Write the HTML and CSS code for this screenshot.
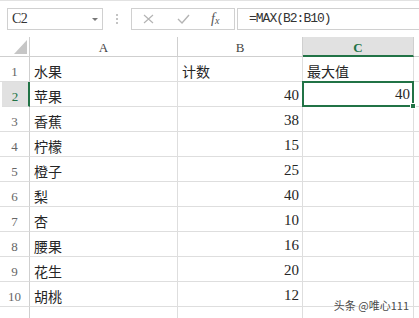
FILE: index.html
```html
<!DOCTYPE html>
<html lang="zh-CN">
<head>
    <meta charset="UTF-8">
    <title>MAX</title>
    <link rel="stylesheet" href="styles.css">
</head>
<body>
    <div class="toolbar">
        <div class="name-box">
            <span>C2</span>
            <svg class="caret" width="6" height="4" viewBox="0 0 6 4"><path d="M0 0h6L3 3z"/></svg>
        </div>
        <div class="grip"><i></i><i></i><i></i></div>
        <div class="buttons">
            <svg class="btn-icon" width="11" height="10" viewBox="0 0 11 10" fill="none" stroke="#b4b4b4" stroke-width="1.2">
                <path d="M1 1l9 8M10 1l-9 8"/>
            </svg>
            <svg class="btn-icon" width="13" height="10" viewBox="0 0 13 10" fill="none" stroke="#b4b4b4" stroke-width="1.4">
                <path d="M1 5l4 4 7-8"/>
            </svg>
            <span class="fx">f<span class="fx-x">x</span></span>
        </div>
        <div class="formula">=MAX(B2:B10)</div>
    </div>

    <div class="sheet">
        <div class="corner">
            <svg width="13" height="14" viewBox="0 0 13 14"><path d="M13 0v14H0z" fill="#c6c6c6"/></svg>
        </div>
        <div class="hd">A</div>
        <div class="hd">B</div>
        <div class="hd active">C</div>
        <div class="hd"></div>

        <div class="rh">1</div>
        <div class="cell">水果</div>
        <div class="cell">计数</div>
        <div class="cell">最大值</div>
        <div class="cell"></div>

        <div class="rh active">2</div>
        <div class="cell">苹果</div>
        <div class="cell num">40</div>
        <div class="cell num selected">40<span class="handle"></span></div>
        <div class="cell"></div>

        <div class="rh">3</div>
        <div class="cell">香蕉</div>
        <div class="cell num">38</div>
        <div class="cell"></div>
        <div class="cell"></div>

        <div class="rh">4</div>
        <div class="cell">柠檬</div>
        <div class="cell num">15</div>
        <div class="cell"></div>
        <div class="cell"></div>

        <div class="rh">5</div>
        <div class="cell">橙子</div>
        <div class="cell num">25</div>
        <div class="cell"></div>
        <div class="cell"></div>

        <div class="rh">6</div>
        <div class="cell">梨</div>
        <div class="cell num">40</div>
        <div class="cell"></div>
        <div class="cell"></div>

        <div class="rh">7</div>
        <div class="cell">杏</div>
        <div class="cell num">10</div>
        <div class="cell"></div>
        <div class="cell"></div>

        <div class="rh">8</div>
        <div class="cell">腰果</div>
        <div class="cell num">16</div>
        <div class="cell"></div>
        <div class="cell"></div>

        <div class="rh">9</div>
        <div class="cell">花生</div>
        <div class="cell num">20</div>
        <div class="cell"></div>
        <div class="cell"></div>

        <div class="rh">10</div>
        <div class="cell">胡桃</div>
        <div class="cell num">12</div>
        <div class="cell"></div>
        <div class="cell"></div>

        <div class="rh">11</div>
        <div class="cell"></div>
        <div class="cell"></div>
        <div class="cell"></div>
        <div class="cell"></div>
    </div>

    <div class="watermark">头条 @唯心111</div>
</body>
</html>
```

FILE: styles.css
```css
* {
    margin: 0;
    padding: 0;
    box-sizing: border-box;
}

:root {
    --green: #217346;
    --grid: #dedede;
    --head-line: #cfcfcf;
    --text: #262626;
}

body {
    position: relative;
    width: 419px;
    height: 318px;
    overflow: hidden;
    background: #ffffff;
    font-family: "Noto Sans CJK SC", "Noto Sans", sans-serif;
    color: var(--text);
}

/* formula bar */
.toolbar {
    height: 37px;
    display: flex;
    align-items: flex-start;
    padding: 7px 0 0 7px;
    border-top: 1px solid #e2e2e2;
}

.name-box {
    width: 96px;
    height: 22px;
    border: 1px solid #d0d0d0;
    display: flex;
    align-items: center;
    justify-content: space-between;
    padding: 0 4px 0 4px;
    font-family: "Liberation Serif", serif;
    font-size: 14px;
    letter-spacing: -0.5px;
    color: #333;
}

.caret {
    fill: #777;
    margin-top: 2px;
}

.grip {
    width: 2px;
    height: 22px;
    margin-left: 13px;
    display: flex;
    flex-direction: column;
    justify-content: center;
    gap: 2px;
}

.grip i {
    display: block;
    width: 2px;
    height: 2px;
    background: #c4c4c4;
}

.buttons {
    width: 104px;
    height: 22px;
    margin-left: 13px;
    border: 1px solid #d0d0d0;
    display: flex;
    align-items: center;
    padding-left: 11px;
}

.btn-icon:nth-child(2) {
    margin-left: 23px;
}

.fx {
    margin-left: 21px;
    font-family: "Liberation Serif", serif;
    font-style: italic;
    font-size: 14px;
    line-height: 16px;
    color: #555;
}

.fx-x {
    font-size: 10px;
    position: relative;
    top: 1px;
}

.formula {
    flex: 1;
    height: 22px;
    margin-left: 2px;
    border: 1px solid #d0d0d0;
    border-right: none;
    padding-left: 11px;
    font-family: "Liberation Mono", monospace;
    font-size: 13px;
    letter-spacing: -1px;
    line-height: 20px;
    color: #333;
}

/* grid */
.sheet {
    display: grid;
    grid-template-columns: 30px 148px 125px 111px 1fr;
    grid-template-rows: 20px;
    grid-auto-rows: 25px;
}

.corner {
    border-right: 1px solid var(--head-line);
    border-bottom: 1px solid var(--head-line);
    display: flex;
    align-items: flex-end;
    justify-content: flex-end;
    padding: 0 2px 2px 0;
}

.hd {
    border-right: 1px solid var(--head-line);
    border-bottom: 1px solid var(--head-line);
    text-align: center;
    font-family: "Liberation Serif", serif;
    font-size: 13px;
    line-height: 16px;
    padding-top: 3px;
    color: #444;
}

.hd.active {
    background: #e1e1e1;
    border-bottom: 2px solid var(--green);
    color: var(--green);
    font-weight: bold;
}

.rh {
    border-right: 1px solid var(--head-line);
    border-bottom: 1px solid var(--grid);
    display: flex;
    align-items: flex-end;
    justify-content: center;
    padding-bottom: 1px;
    font-family: "Liberation Serif", serif;
    font-size: 13px;
    line-height: 16px;
    color: #666;
}

.rh.active {
    background: #e1e1e1;
    border-right: 2px solid var(--green);
    color: var(--green);
    margin-left: 2px;
}

.cell {
    border-right: 1px solid var(--grid);
    border-bottom: 1px solid var(--grid);
    display: flex;
    align-items: flex-end;
    padding: 0 3px 2px 4px;
    font-size: 14px;
    line-height: 16px;
}

.cell.num {
    justify-content: flex-end;
    font-family: "Liberation Serif", serif;
    font-size: 15px;
    padding-bottom: 3px;
}

.cell.selected {
    position: relative;
    margin: -1px 0 0 -1px;
    border: 2px solid var(--green);
    padding-right: 2px;
}

.handle {
    position: absolute;
    right: -4px;
    bottom: -4px;
    width: 6px;
    height: 6px;
    background: var(--green);
    border: 1px solid #ffffff;
}

.watermark {
    position: absolute;
    right: 10px;
    bottom: 6px;
    font-size: 11px;
    line-height: 14px;
    color: #4a4a4a;
    text-shadow: 0 0 2px #ffffff, 0 0 2px #ffffff;
}
```
